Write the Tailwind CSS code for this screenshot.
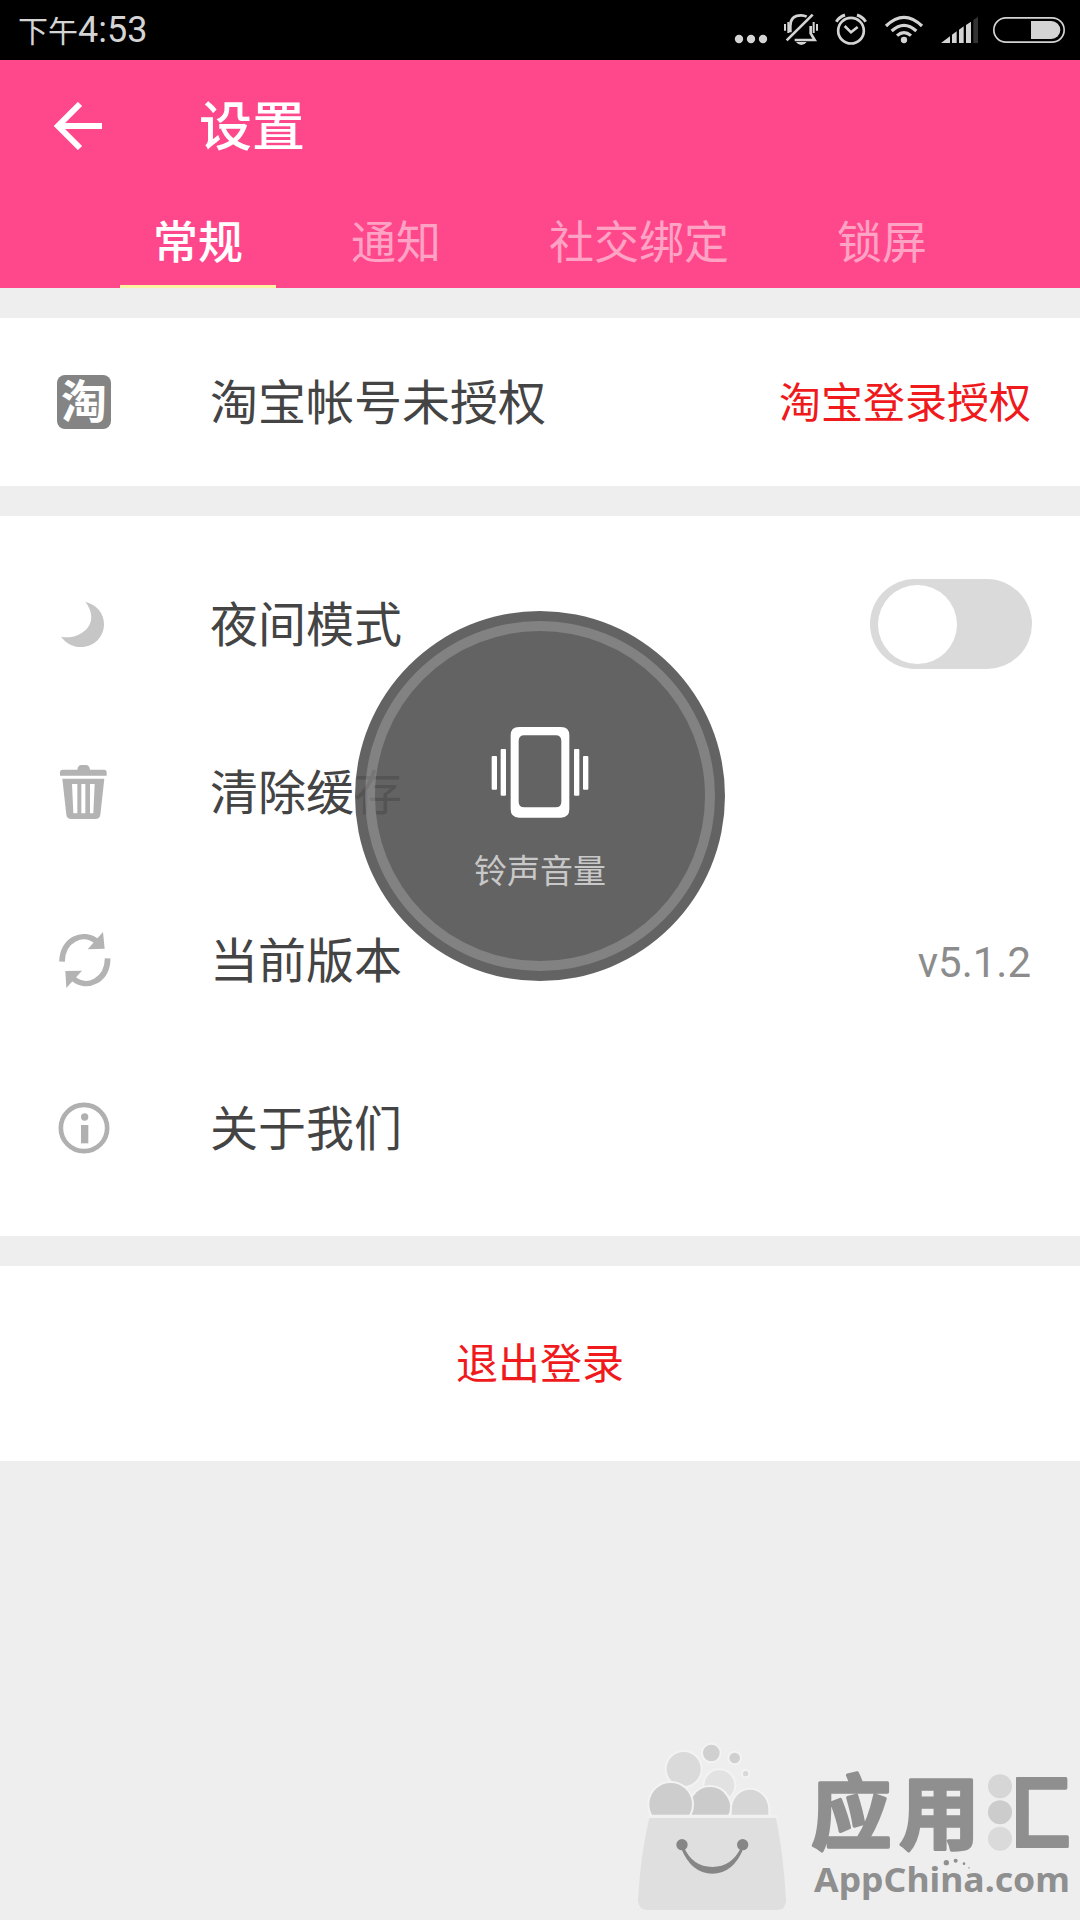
<!DOCTYPE html>
<html lang="zh-CN">
<head>
<meta charset="utf-8">
<title>设置</title>
<script src="https://cdn.jsdelivr.net/npm/@tailwindcss/browser@4"></script>
</head>
<body class="bg-[#eeeeee]">
<div class="relative flex h-[1920px] w-[1080px] flex-col overflow-hidden bg-[#eeeeee] font-['Roboto','Noto_Sans_CJK_SC',sans-serif] text-[#444444]">

  <!-- Status bar -->
  <div class="flex h-[60px] shrink-0 items-center justify-between bg-black pl-[18px] text-[#d4d4d4]">
    <div class="flex items-baseline leading-none"><span class="text-[30px]">下午</span><span class="text-[36px]">4:53</span></div>
    <svg class="h-[60px] w-[360px]" viewBox="0 0 1080 180" fill="none" stroke="#d4d4d4">
      <g fill="#d4d4d4" stroke="none">
        <circle cx="57" cy="117" r="12.500"/><circle cx="93" cy="117" r="12.500"/><circle cx="129" cy="117" r="12.500"/>
      </g>
      <g stroke-width="8">
        <path d="M211 97V78q0-32 32-32 10 0 17 4M272 78v22l12 20H224"/>
        <path d="M278 44 200 121"/>
        <path stroke-width="6" d="M205 66v33M195 72v20M281 66v33M291 72v20"/>
        <path fill="#d4d4d4" stroke="none" d="M228 126h32q-6 9-16 9t-16-9z"/>
      </g>
      <g stroke-width="8">
        <circle cx="393" cy="92" r="38.500"/>
        <path d="M374 78l19 19 20-16"/>
        <path stroke-width="9" d="M349 65q8-14 26-20M437 65q-8-14-26-20"/>
      </g>
      <g stroke-width="9.500">
        <path d="M498 78q54-52 108 0M515 93q37-34 74 0M531 107q21-18 42 0"/>
        <circle cx="552" cy="120" r="9.500" fill="#d4d4d4" stroke="none"/>
      </g>
      <g fill="#d4d4d4" stroke="none">
        <path d="M663 129l27-20v20zM696 104l14-10v35h-14zM717 89l14-10v50h-14zM738 75l15-10v64h-15z"/>
        <path fill="#333" d="M760 60l14-10v79h-14z"/>
      </g>
      <rect x="821.500" y="53.500" width="211" height="73" rx="36.500" stroke-width="5"/>
      <path d="M933 63h61a27 27 0 0 1 0 54h-61z" fill="#d4d4d4" stroke="none"/>
    </svg>
  </div>

  <!-- App bar with tabs -->
  <header class="flex h-[228px] shrink-0 flex-col bg-[#ff478c] text-white">
    <div class="flex h-[132px] items-center pl-[54px]">
      <svg class="h-12 w-12" viewBox="0 0 48 48" fill="none" stroke="#fff" stroke-width="6"><path d="M26 2 4 24l22 22M4 24h44"/></svg>
      <h1 class="ml-[97px] pt-[5px] text-[53px] font-medium leading-none">设置</h1>
    </div>
    <nav class="flex flex-1 justify-center gap-[42px] text-[45px] leading-none text-white/50">
      <div class="flex items-center border-b-[3px] border-[#fbf3a2] px-[33px] pt-[9px] font-medium text-white">常规</div>
      <div class="flex items-center px-[33px] pt-[6px]">通知</div>
      <div class="flex items-center px-[33px] pt-[6px]">社交绑定</div>
      <div class="flex items-center px-[33px] pt-[6px]">锁屏</div>
    </nav>
  </header>

  <main class="mt-[30px] flex flex-col gap-[30px]">
    <section class="flex h-[168px] items-center bg-white pl-[57px] pr-[49px]">
      <div class="flex h-[54px] w-[54px] items-center justify-center rounded-[8px] bg-[#848484] text-[46px] font-bold leading-none text-white">淘</div>
      <span class="ml-[99px] pt-[3px] text-5xl leading-none">淘宝帐号未授权</span>
      <span class="ml-auto pt-[3px] text-[42px] leading-none text-[#f0191c]">淘宝登录授权</span>
    </section>

    <section class="bg-white py-6">
      <div class="flex h-[168px] items-center pl-14 pr-12">
        <svg class="h-14 w-14" viewBox="168 108 168 168"><path fill="#c6c6c6" d="M256 125C290 134 312 160 312 192C312 231 282 261 243 261C219 261 198 250 183 230C235 242 308 195 256 125Z"/></svg>
        <span class="ml-[98px] pt-[3px] text-5xl leading-none">夜间模式</span>
        <div class="ml-auto flex h-[90px] w-[162px] items-center rounded-full bg-[#dadada] pl-[8px]"><div class="h-[79px] w-[79px] rounded-full bg-white"></div></div>
      </div>
      <div class="flex h-[168px] items-center pl-14 pr-12">
        <svg class="h-14 w-14" viewBox="168 612 168 168" fill="#b3b3b3">
          <path d="M180 647v-10q0-8 8-8h44q2-14 12-14h14q10 0 12 14h42q8 0 8 8v10z"/>
          <path fill-rule="evenodd" d="M187 656h126l-12 108q-2 13-15 13h-72q-13 0-15-13zM216 672l4 88h12v-88zM244 672v88h12v-88zM270 672v88h10l4-88z"/>
        </svg>
        <span class="ml-[98px] pt-[3px] text-5xl leading-none">清除缓存</span>
      </div>
      <div class="flex h-[168px] items-center pl-14 pr-[49px]">
        <svg class="h-14 w-14" viewBox="168 96 168 168">
          <g fill="none" stroke="#b3b3b3" stroke-width="17"><path d="M186 185C187 118 250 90 292 126M323 175C322 242 260 270 220 236"/></g>
          <path fill="#b3b3b3" d="M309 96l5 50-51 2zM199 264l-3-51 50-1z"/>
        </svg>
        <span class="ml-[98px] pt-[3px] text-5xl leading-none">当前版本</span>
        <span class="ml-auto pt-[5px] text-[42px] leading-none text-[#8c8c8c]">v5.1.2</span>
      </div>
      <div class="flex h-[168px] items-center pl-14 pr-12">
        <svg class="h-14 w-14" viewBox="168 600 168 168" fill="#b0b0b0">
          <circle cx="252" cy="684" r="69.500" fill="none" stroke="#b0b0b0" stroke-width="14"/>
          <circle cx="254" cy="651" r="11"/><path d="M243 675h22v55h-22z"/>
        </svg>
        <span class="ml-[98px] pt-[3px] text-5xl leading-none">关于我们</span>
      </div>
    </section>

    <section class="flex h-[195px] items-center justify-center bg-white pt-[3px] text-[42px] leading-none text-[#f0191c]">退出登录</section>
  </main>

  <!-- Ringer volume overlay -->
  <div class="absolute left-[355px] top-[611px] flex h-[370px] w-[370px] flex-col items-center rounded-full bg-[#565656]/92 text-[#c8c8c8]">
    <div class="absolute inset-[10px] rounded-full border-[10px] border-white/20"></div>
    <svg class="mt-[116px] h-[91px] w-[98px]" viewBox="453 380 294 273" fill="#fff">
      <path fill-rule="evenodd" d="M537 380h126q25 0 25 25v222q0 25-25 25H537q-25 0-25-25V405q0-25 25-25zM553 405q-17 0-17 17v182q0 17 17 17h94q17 0 17-17V422q0-17-17-17z"/>
      <rect x="455" y="467" width="16" height="101" rx="3"/><rect x="482" y="446" width="16" height="140" rx="3"/>
      <rect x="702" y="446" width="16" height="140" rx="3"/><rect x="729" y="467" width="16" height="101" rx="3"/>
    </svg>
    <span class="mt-[37px] text-[33px] leading-none">铃声音量</span>
  </div>

  <!-- App store watermark -->
  <svg class="absolute bottom-0 right-0 h-[200px] w-[460px]" viewBox="0 0 1380 600">
    <defs><clipPath id="box"><rect x="1188" y="140" width="192" height="270"/></clipPath></defs>
    <g stroke="#f3f3f3" stroke-width="6">
      <circle cx="298" cy="196" r="48" fill="#e2e2e2"/>
      <circle cx="191" cy="147" r="54" fill="#dadada"/>
      <circle cx="274" cy="99" r="28" fill="#d0d0d0"/>
      <circle cx="344" cy="114" r="19" fill="#d0d0d0"/>
      <circle cx="377" cy="161" r="11" fill="#d8d8d8"/>
      <path d="M332 290v-20a58 64 0 0 1 116 0v20z" fill="#d6d6d6"/>
      <path d="M214 290a63 63 0 1 1 112 0z" fill="#cbcbcb"/>
      <path d="M96 290a67 67 0 1 1 112 0z" fill="#cdcdcd"/>
    </g>
    <path d="M88 294H468Q490 400 498 540Q498 570 470 570H84Q54 570 54 540Q62 400 88 294Z" fill="#dfdfdf"/>
    <path d="M80 289H474" stroke="#f1f1f1" stroke-width="9"/>
    <g fill="#868686"><circle cx="186" cy="374" r="17"/><circle cx="368" cy="374" r="17"/>
      <path d="M183 384Q214 461 277 461Q340 461 371 384L363 382Q336 441 277 441Q218 441 192 382Z"/></g>
    <g fill="#8f8f8f" stroke="#8f8f8f" stroke-width="10" stroke-linejoin="round" class="font-['Noto_Sans_CJK_SC',sans-serif] font-bold" font-size="240">
      <text x="574" y="367">应</text><text x="838" y="367">用</text>
      <text x="1110" y="367" clip-path="url(#box)">汇</text>
    </g>
    <circle cx="1140" cy="199" r="36" fill="#d6d6d6"/><circle cx="1140" cy="277" r="36" fill="#cccccc"/><circle cx="1140" cy="356" r="36" fill="#dadada"/>
    <text x="582" y="517" textLength="768" lengthAdjust="spacingAndGlyphs" font-size="100" fill="#8f8f8f" class="font-['Noto_Sans',sans-serif] font-bold">AppChina.com</text>
    <g fill="#8f8f8f"><circle cx="979" cy="428" r="8"/><circle cx="1007" cy="422" r="6"/><circle cx="1032" cy="431" r="4"/><circle cx="1047" cy="443" r="3" fill="#bbb"/></g>
  </svg>
</div>
</body>
</html>
